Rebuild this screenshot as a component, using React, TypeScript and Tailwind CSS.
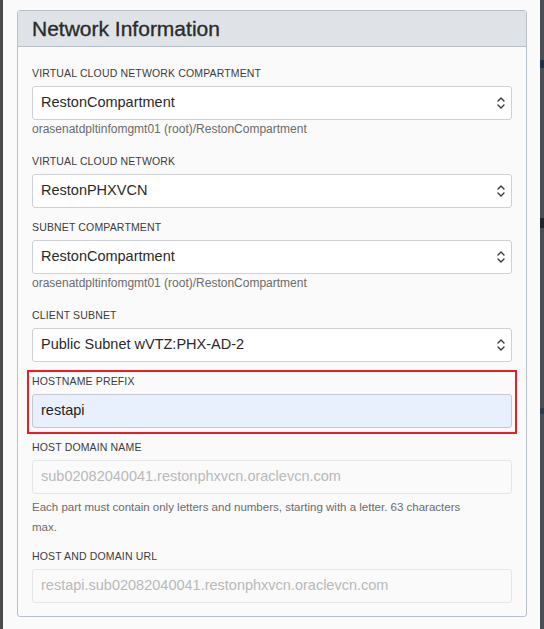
import type { ReactNode } from "react";

function Chevrons() {
  return (
    <svg width="10" height="16" viewBox="0 0 10 16" fill="none" className="shrink-0">
      <path d="M2 6 L5 3 L8 6" stroke="#3a3a3a" strokeWidth="1.4" strokeLinecap="round" strokeLinejoin="round" />
      <path d="M2 10 L5 13 L8 10" stroke="#3a3a3a" strokeWidth="1.4" strokeLinecap="round" strokeLinejoin="round" />
    </svg>
  );
}

function Label({ children }: { children: ReactNode }) {
  return (
    <div className="mb-[6px] h-[14px] text-[10.5px] leading-[14px] tracking-[0.15px] text-[#3c3c3c] uppercase">
      {children}
    </div>
  );
}

function Select({ value }: { value: string }) {
  return (
    <div className="flex h-[34px] items-center justify-between rounded-[3px] border border-[#cdd1d6] bg-white pl-[8px] pr-[5px] text-[14.5px] text-[#2a2a2a]">
      <span>{value}</span>
      <Chevrons />
    </div>
  );
}

function ReadOnly({ value }: { value: string }) {
  return (
    <div className="flex h-[34px] items-center rounded-[3px] border border-[#e6e6e6] bg-[#fafafa] px-[8px] text-[14.5px] text-[#b9b9b9]">
      {value}
    </div>
  );
}

function Hint({ children }: { children: ReactNode }) {
  return <div className="mt-[1px] pb-[5px] text-[12px] leading-[16px] text-[#6b6b6b]">{children}</div>;
}

export default function App() {
  return (
    <div
      className="flex h-[629px] w-[544px] overflow-hidden bg-[#fafafa]"
      style={{ fontFamily: '"Liberation Sans", Arial, sans-serif' }}
    >
      <div className="w-[3px] shrink-0 bg-[#4b4b4b]" />

      <div className="flex-1 pl-[14px] pr-[13px] pt-[10px]">
        <section className="rounded-[3px] border border-[#b7bfc9] bg-[#fafafa]">
          <header className="flex h-[36px] items-center border-b border-[#b7bfc9] bg-[#dfe3e7] px-[14px]">
            <h2 className="text-[21px] font-normal text-[#2b2b2b] [-webkit-text-stroke:0.35px_#2b2b2b]">
              Network Information
            </h2>
          </header>

          <div className="px-[14px] pb-[13px] pt-[19px]">
            {/* compartment + vcn */}
            <div className="mb-[12px]">
              <Label>Virtual Cloud Network Compartment</Label>
              <Select value="RestonCompartment" />
              <Hint>orasenatdpltinfomgmt01 (root)/RestonCompartment</Hint>
            </div>

            <div className="mb-[12px]">
              <Label>Virtual Cloud Network</Label>
              <Select value="RestonPHXVCN" />
            </div>

            <div className="mb-[12px]">
              <Label>Subnet Compartment</Label>
              <Select value="RestonCompartment" />
              <Hint>orasenatdpltinfomgmt01 (root)/RestonCompartment</Hint>
            </div>

            <div className="mb-[12px]">
              <Label>Client Subnet</Label>
              <Select value="Public Subnet wVTZ:PHX-AD-2" />
            </div>

            {/* highlighted field */}
            <div className="-mx-[5px] -mt-[4px] mb-[6px] border-2 border-[#ea1c24] px-[3px] pb-[4px] pt-[2px]">
              <Label>Hostname Prefix</Label>
              <div className="flex h-[34px] items-center rounded-[3px] border border-[#c6cad0] bg-[#e8f0fe] px-[8px] text-[14.5px] text-[#1f1f1f]">
                restapi
              </div>
            </div>

            <div className="mb-[12px]">
              <Label>Host Domain Name</Label>
              <ReadOnly value="sub02082040041.restonphxvcn.oraclevcn.com" />
              <div className="mt-[3px] text-[11.5px] leading-[20px] text-[#6b6b6b]">
                Each part must contain only letters and numbers, starting with a letter. 63 characters
                <br />
                max.
              </div>
            </div>

            <div>
              <Label>Host and Domain URL</Label>
              <ReadOnly value="restapi.sub02082040041.restonphxvcn.oraclevcn.com" />
            </div>
          </div>
        </section>
      </div>

      <div className="flex w-[4px] shrink-0 flex-col bg-[#4a4e54]">
        <div className="mt-[60px] h-[8px] bg-[#1f2f45]" />
        <div className="mt-[150px] h-[10px] bg-[#20252c]" />
        <div className="mt-[180px] h-[6px] bg-[#2a3a50]" />
      </div>
    </div>
  );
}
